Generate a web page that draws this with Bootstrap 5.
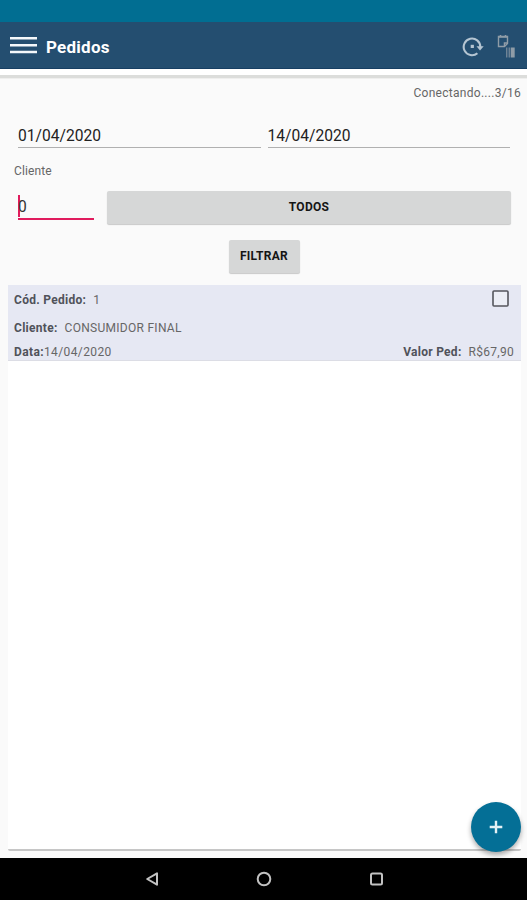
<!DOCTYPE html>
<html lang="pt-BR">
<head>
<meta charset="utf-8">
<meta name="viewport" content="width=device-width, initial-scale=1">
<title>Pedidos</title>
<link href="https://cdn.jsdelivr.net/npm/bootstrap@5.3.0/dist/css/bootstrap.min.css" rel="stylesheet">
<style>
body{font-family:Roboto,sans-serif;background:#fafafa;color:#666;height:900px;font-size:12px;line-height:16px;overflow:hidden}
.statusbar{height:22px;background:#016e92}
.appbar{height:47px;background:#244e70;padding:0 10px 0 9px;border-bottom:1px solid #173f63}
.appbar h1{font-size:17px;line-height:20px;margin:3px 0 0 9px;font-weight:700;letter-spacing:.25px}
.divider{height:10px;border-top:6px solid #fff;border-bottom:1px solid #efefee;background:#dcdddb}
.sync{font-size:12px;padding:6px 6px 0 0;height:46px;letter-spacing:.28px}
.date-row{padding:0 17px 0 18px;gap:7px;height:23px}
.field{font-size:15.6px;line-height:22px;color:#222;border:0;border-bottom:1px solid #b0b0b0;background:transparent;padding:0;border-radius:0}
.client-label{padding:15px 0 0 14px;height:43px;letter-spacing:.1px}
.client-row{height:34px;padding:0 16px 0 18px}
.code-field{width:76px;height:29px;border-bottom:2px solid #e01b5d;font-size:15.6px;line-height:24px;color:#333}
.caret{width:2px;height:22px;background:#e01b5d;margin:4px -2px 0 0}
.gray-btn{--bs-btn-bg:#d6d7d7;--bs-btn-color:#151515;--bs-btn-border-width:0;--bs-btn-border-radius:2px;font-size:12px;line-height:15px;font-weight:700;box-shadow:0 1px 1px #0003;padding:0;letter-spacing:.3px}
.todos{margin-left:13px;height:33px}
.filtrar{width:71px;height:33px}
.filter-row{padding:15px 0 0 1px;height:60px}
.orders{margin:0 6px 0 8px;height:566px;background:#fff;border-bottom:2px solid #c6c6c6;border-radius:0 0 2px 2px}
.order{height:76px;background:#e6e8f3;border-bottom:1px solid #dcdde5;padding:7px 7px 0 6px;letter-spacing:.28px}
.order b{color:#50525a}
.order .gap-after{margin-right:7px}
.order .line2{margin-top:12px}
.order .line3{margin-top:8px}
.order .date-value{letter-spacing:.38px}
.tick{margin:-2px 5px 0 0}
.sync-icon{margin:2px -3px 0 0}
.export-icon{margin-top:2px}
.navkeys{height:42px;background:#000;margin-top:7px}
.fab{right:6px;top:802px;width:50px;height:50px;background:#046f96;box-shadow:0 3px 5px #0005}
</style>
<script src="https://cdn.jsdelivr.net/npm/bootstrap@5.3.0/dist/js/bootstrap.bundle.min.js"></script>
</head>
<body class="position-relative">
<div class="statusbar"></div>
<header class="appbar d-flex align-items-center text-white">
  <svg width="28" height="20" viewBox="0 0 28 20" stroke="#f4f8fb" stroke-width="2.4"><path d="M1 3.3h27M1 10.3h27M1 17h27"/></svg>
  <h1>Pedidos</h1>
  <div class="ms-auto d-flex align-items-center">
    <svg class="sync-icon" width="22" height="22" viewBox="0 0 22 22" fill="none" stroke="#b5c5d2" stroke-width="2.1"><path d="M15.4 18.2A8.3 8.3 0 1 1 18.3 12"/><path d="M14.5 11.3h7.2L18 15.6z" fill="#b5c5d2" stroke="none"/><rect x="8.7" y="9.8" width="3.2" height="3.2" fill="#b5c5d2" stroke="none"/></svg>
    <svg class="export-icon ms-3" width="20" height="26" viewBox="0 0 20 26" fill="none" stroke="#8f9ca7"><path d="M1.5 3.5h9v7l-3 3h-6z" stroke-width="1.4"/><path d="M1 4h10M3.5 2v2M8.5 2v2M7.5 13v-3h3" stroke-width="1.5"/><path d="M9.8 14.5v10M12.2 14.5v10" stroke-width="1"/><path d="M15.7 14.5v10" stroke-width="4"/></svg>
  </div>
</header>
<div class="divider"></div>
<main>
  <div class="sync text-end">Conectando....3/16</div>
  <div class="date-row d-flex">
    <div class="field flex-fill">01/04/2020</div>
    <div class="field flex-fill">14/04/2020</div>
  </div>
  <div class="client-label">Cliente</div>
  <div class="client-row d-flex">
    <div class="code-field d-flex"><span class="caret"></span><span class="pt-1">0</span></div>
    <button class="btn gray-btn todos flex-fill" type="button">TODOS</button>
  </div>
  <div class="filter-row text-center"><button class="btn gray-btn filtrar" type="button">FILTRAR</button></div>
  <section class="orders">
    <article class="order">
      <div class="d-flex justify-content-between"><div><b class="gap-after">Cód. Pedido:</b>1</div>
        <svg class="tick" width="17" height="17" viewBox="0 0 17 17"><rect x="1" y="1" width="15" height="15" rx="1" fill="#eceef5" stroke="#55565c" stroke-width="1.6"/></svg></div>
      <div class="line2"><b class="gap-after">Cliente:</b>CONSUMIDOR FINAL</div>
      <div class="line3 d-flex justify-content-between"><div class="date-value"><b>Data:</b>14/04/2020</div><div><b class="gap-after">Valor Ped:</b>R$67,90</div></div>
    </article>
  </section>
</main>
<footer class="navkeys d-flex align-items-center justify-content-center">
  <svg width="240" height="18" viewBox="0 0 240 18" fill="none" stroke="#c2c2c2" stroke-width="2"><path d="M13 3.3v11.4L3.2 9z" stroke-linejoin="round"/><circle cx="120" cy="9" r="6.3"/><rect x="227" y="3.5" width="11" height="11" rx="1.5"/></svg>
</footer>
<button class="fab btn rounded-circle position-absolute p-0 border-0 d-flex align-items-center justify-content-center" type="button" aria-label="Adicionar">
  <svg width="14" height="14" viewBox="0 0 14 14" stroke="#e5f1f5" stroke-width="2.4"><path d="M7 .7v12.6M.7 7h12.6"/></svg>
</button>
</body>
</html>
